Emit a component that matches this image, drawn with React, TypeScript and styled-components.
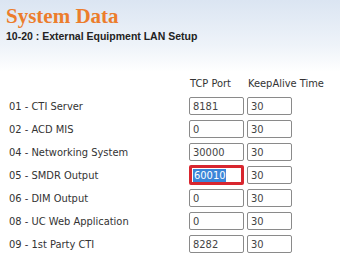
import React, { FC } from "react";
import styled, { createGlobalStyle } from "styled-components";

const GlobalStyle = createGlobalStyle`
  html, body {
    margin: 0;
    padding: 0;
    background: #fff;
  }
  body {
    font-family: "DejaVu Sans Condensed", Tahoma, sans-serif;
  }
`;

const Page = styled.div`
  width: 340px;
  height: 256px;
  overflow: hidden;
  background: linear-gradient(to bottom, #dbe5f2 0px, #eef3f9 45px, #ffffff 72px, #ffffff 100%);
`;

const Header = styled.div`
  padding: 4px 0 0 6px;
  height: 76px;
  box-sizing: border-box;
`;

const Title = styled.h1`
  margin: 0;
  font-family: "Liberation Serif", serif;
  font-weight: bold;
  font-size: 21px;
  line-height: 24px;
  color: #ec7d2c;
`;

const Subtitle = styled.h2`
  margin: 1px 0 0;
  font-family: "Liberation Sans", Arial, sans-serif;
  font-weight: bold;
  font-size: 10.5px;
  line-height: 14px;
  color: #222;
`;

const Grid = styled.div`
  display: grid;
  grid-template-columns: 177px 55px 45px;
  column-gap: 3px;
  row-gap: 5px;
  padding-left: 9px;
  align-items: center;
`;

const ColHead = styled.div`
  font-size: 11px;
  color: #333;
  white-space: nowrap;
  height: 16px;
  line-height: 16px;
  padding-left: 1px;
`;

const Label = styled.div`
  font-size: 11px;
  color: #333;
  white-space: nowrap;
`;

const Field = styled.div<{ $focused?: boolean }>`
  box-sizing: border-box;
  border: ${(p) => (p.$focused ? "3px solid #d8262f" : "1px solid #8a8a8a")};
  margin: ${(p) => (p.$focused ? "-1px 0" : "0")};
  height: ${(p) => (p.$focused ? "20px" : "18px")};
  border-radius: 2px;
  background: #fff;
  display: flex;
  align-items: center;
  padding-left: ${(p) => (p.$focused ? "1px" : "3px")};
  font-size: 11px;
  color: #444;
`;

const Selected = styled.span`
  background: #3b86d8;
  color: #fff;
  padding: 0 1px;
  line-height: 13px;
`;

const rows = [
  { label: "01 - CTI Server", port: "8181", keep: "30" },
  { label: "02 - ACD MIS", port: "0", keep: "30" },
  { label: "04 - Networking System", port: "30000", keep: "30" },
  { label: "05 - SMDR Output", port: "60010", keep: "30", focused: true },
  { label: "06 - DIM Output", port: "0", keep: "30" },
  { label: "08 - UC Web Application", port: "0", keep: "30" },
  { label: "09 - 1st Party CTI", port: "8282", keep: "30" },
];

const App: FC = () => (
  <Page>
    <GlobalStyle />
    <Header>
      <Title>System Data</Title>
      <Subtitle>10-20 : External Equipment LAN Setup</Subtitle>
    </Header>
    <Grid>
      <div />
      <ColHead>TCP Port</ColHead>
      <ColHead>KeepAlive Time</ColHead>
      {rows.map((r) => (
        <React.Fragment key={r.label}>
          <Label>{r.label}</Label>
          <Field $focused={r.focused}>
            {r.focused ? <Selected>{r.port}</Selected> : r.port}
          </Field>
          <Field>{r.keep}</Field>
        </React.Fragment>
      ))}
    </Grid>
  </Page>
);

export default App;
